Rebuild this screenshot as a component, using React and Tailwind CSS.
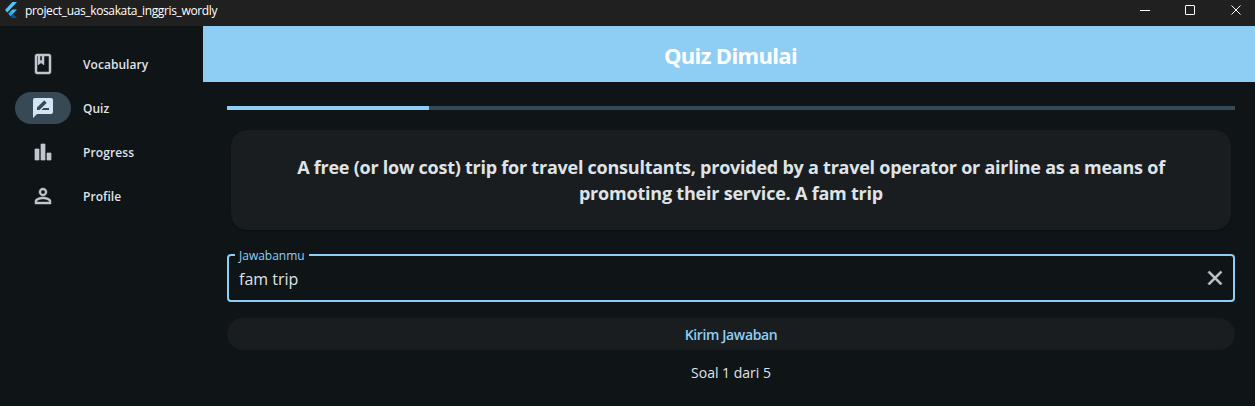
const nav = [
  {
    label: "Vocabulary",
    ls: "tracking-[0.05px]",
    stroke: 0.5,
    d: "M18 2H6c-1.1 0-2 .9-2 2v16c0 1.1.9 2 2 2h12c1.1 0 2-.9 2-2V4c0-1.1-.9-2-2-2zM9 4h2v5l-1-.75L9 9V4zm9 16H6V4h1v9l3-2.25L13 13V4h5v16z",
  },
  {
    label: "Quiz",
    ls: "tracking-[0px]",
    stroke: 0,
    active: true,
    d: "M20 2H4c-1.1 0-1.99.9-1.99 2L2 22l4-4h14c1.1 0 2-.9 2-2V4c0-1.1-.9-2-2-2zM6 14v-2.47l6.88-6.88c.2-.2.51-.2.71 0l1.77 1.77c.2.2.2.51 0 .71L8.47 14H6zm12 0h-7.5l2-2H18v2z",
  },
  {
    label: "Progress",
    ls: "tracking-[0.1px]",
    stroke: 0.7,
    d: "M4 9h4v11H4zM16 13h4v7h-4zM10 4h4v16h-4z",
  },
  {
    label: "Profile",
    ls: "tracking-[0.05px]",
    stroke: 0.5,
    d: "M12 5.9c1.16 0 2.1.94 2.1 2.1s-.94 2.1-2.1 2.1S9.9 9.16 9.9 8s.94-2.1 2.1-2.1m0 9c2.97 0 6.1 1.46 6.1 2.1v1.1H5.9V17c0-.64 3.13-2.1 6.1-2.1M12 4C9.79 4 8 5.79 8 8s1.79 4 4 4 4-1.79 4-4-1.79-4-4-4zm0 9c-2.67 0-8 1.34-8 4v3h16v-3c0-2.66-5.33-4-8-4z",
  },
];

function TitleBar() {
  return (
    <header className="flex h-[26px] shrink-0 items-start justify-between bg-[#202020] text-white">
      <div className="flex items-start pl-[5px]">
        <svg className="mt-[2px] h-4 w-[12px]" viewBox="2.3 0 19.4 24" preserveAspectRatio="none">
          <path d="M14.3 0L2.3 12 6 15.7 21.7 0z" fill="#54c5f8" />
          <path d="M14.3 11.07L7.86 17.5l3.7 3.75L21.7 11.07z" fill="#46bdf5" />
          <path d="M11.56 13.8L7.86 17.5l3.7 3.75 3.7-3.75z" fill="#29a6e6" />
          <path d="M15.24 17.53L11.56 21.2 14.33 24h7.37z" fill="#01579b" />
        </svg>
        <span className="ml-[8px] whitespace-nowrap text-[12px] leading-[22px] tracking-[-0.36px]">project_uas_kosakata_inggris_wordly</span>
      </div>
      <div className="flex pt-[5px]">
        <svg className="h-[11px] w-[115px]" viewBox="0 0 115 11" fill="none" stroke="#fff">
          <path d="M0 5.5h10" />
          <rect x="45.5" y=".5" width="9" height="9" rx=".5" />
          <path d="M91.5.5l9 9M100.5.5l-9 9" />
        </svg>
      </div>
    </header>
  );
}

function Sidebar() {
  return (
    <nav className="flex w-[203px] shrink-0 flex-col gap-3 pl-[15px] pt-[22px]">
      {nav.map((n) => (
        <div key={n.label} className="flex h-8 items-center">
          <div
            className={
              n.active
                ? "flex h-8 w-14 items-center justify-center rounded-full bg-[#374955] text-[#d2e5f5]"
                : "flex h-8 w-14 items-center justify-center text-[#c1c7ce]"
            }
          >
            <svg className="h-6 w-6" viewBox="0 0 24 24" fill="currentColor" stroke="currentColor" strokeWidth={n.stroke}>
              <path d={n.d} />
            </svg>
          </div>
          <span className={"ml-3 pt-[2px] text-[12px] font-semibold leading-4 text-[#dfe3e7] " + n.ls}>{n.label}</span>
        </div>
      ))}
    </nav>
  );
}

export default function App() {
  return (
    <div className="flex h-[406px] w-[1255px] flex-col overflow-hidden bg-[#0f1417] font-['Open_Sans',sans-serif]">
      <TitleBar />
      <div className="flex min-h-0 flex-1">
        <Sidebar />
        <main className="flex min-w-0 flex-1 flex-col">
          <div className="flex h-14 shrink-0 items-center justify-center bg-[#8fcef4]">
            <h1 className="pl-[3px] pt-px text-[22px] font-bold leading-7 tracking-[-0.65px] text-white">Quiz Dimulai</h1>
          </div>
          <div className="flex flex-col pl-6 pr-5 pt-6">
            <div className="h-1 bg-[#374955]">
              <div className="h-full w-1/5 bg-[#8fcef4]" />
            </div>
            <section className="mx-1 mt-5 flex h-[100px] flex-col items-center justify-center rounded-2xl bg-[#191d1f] text-[18px] font-bold leading-[26px] text-[#dfe3e7] shadow-[0_1px_2px_rgba(0,0,0,0.3)]">
              <span className="whitespace-nowrap tracking-[-0.24px]">A free (or low cost) trip for travel consultants, provided by a travel operator or airline as a means of</span>
              <span className="whitespace-nowrap tracking-[-0.21px]">promoting their service. A fam trip</span>
            </section>
            <div className="relative mt-6 flex h-12 items-center justify-between rounded border-2 border-[#8fcef4] pl-[10px] pr-[6px]">
              <span className="absolute -top-[8px] left-[6px] bg-[#0f1417] px-1 text-[12px] leading-4 text-[#8fcef4]">Jawabanmu</span>
              <span className="pt-[2px] text-[16px] leading-6 text-[#dfe3e7]">fam trip</span>
              <svg className="h-6 w-6" viewBox="0 0 24 24" fill="#c1c7ce" stroke="#c1c7ce" strokeWidth="0.6">
                <path d="M19 6.41L17.59 5 12 10.59 6.41 5 5 6.41 10.59 12 5 17.59 6.41 19 12 13.41 17.59 19 19 17.59 13.41 12z" />
              </svg>
            </div>
            <button className="mt-4 flex h-8 items-center justify-center rounded-full bg-[#191d1f] pt-[2px] text-[14px] font-semibold leading-5 tracking-[-0.36px] text-[#8fcef4]">
              Kirim Jawaban
            </button>
            <p className="mt-[13px] text-center text-[14px] leading-5 text-[#dfe3e7]">Soal 1 dari 5</p>
          </div>
        </main>
      </div>
    </div>
  );
}
